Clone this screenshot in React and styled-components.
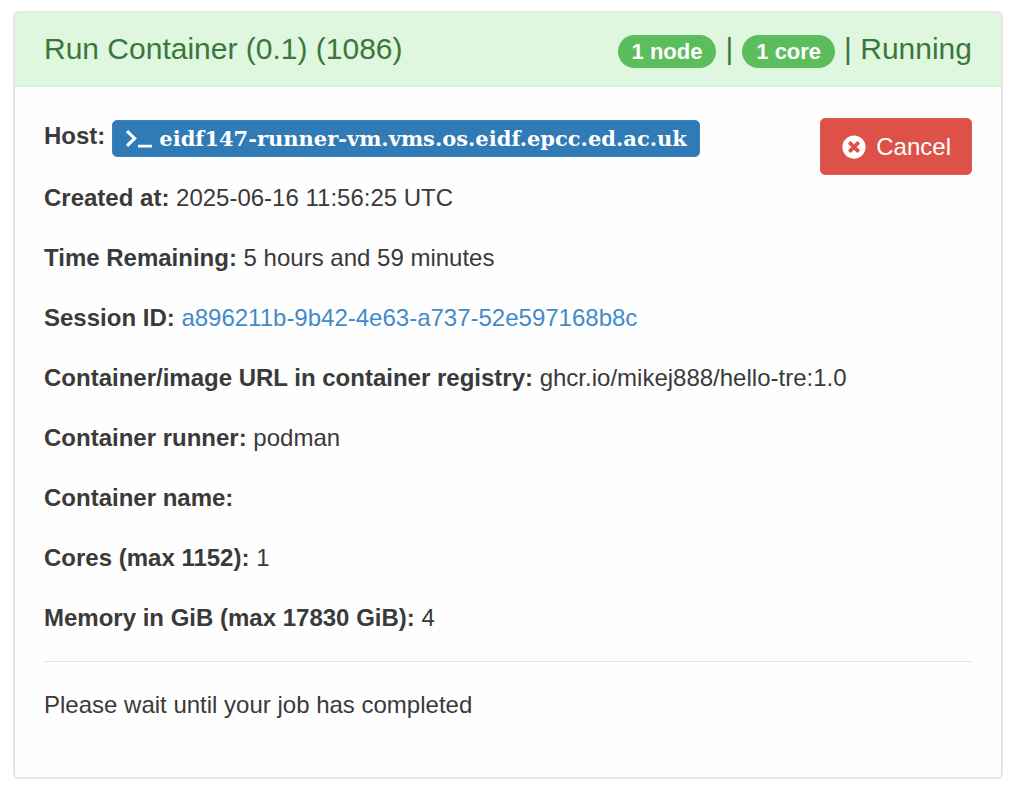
import React from "react";
import styled, { createGlobalStyle } from "styled-components";
import { FaTimesCircle } from "react-icons/fa";

const GlobalStyle = createGlobalStyle`
  *, *::before, *::after { box-sizing: border-box; }
  body {
    margin: 0;
    background: #fff;
    color: #3a3a3a;
    font-family: "Liberation Sans", Arial, sans-serif;
    font-size: 24px;
    line-height: 34px;
  }
`;

const Page = styled.main`
  padding: 11px 13px 8px;
`;

const Panel = styled.section`
  border: 2px solid #e6e6e6;
  border-radius: 6px;
  background: #fefefe;
  overflow: hidden;
`;

const PanelHeader = styled.header`
  display: flex;
  justify-content: space-between;
  align-items: center;
  padding: 16px 29px 17px;
  border-bottom: 2px solid #d6f1d3;
  background: #dff6df;
  color: #3c763d;
  font-size: 30px;
  line-height: 35px;
`;

const Title = styled.h1`
  margin: 0;
  font-size: inherit;
  font-weight: 400;
`;

const Status = styled.div`
  display: flex;
  align-items: center;
  gap: 9px;
`;

const Badge = styled.span`
  padding: 4px 14px;
  margin-top: 6px;
  border-radius: 17px;
  background: #5cbd5c;
  color: #fff;
  font-size: 22px;
  font-weight: 700;
  line-height: 25px;
`;

const PanelBody = styled.div`
  padding: 30px 29px 29px;
`;

const Row = styled.p`
  margin: 0 0 26px;
`;

const HostRow = styled.div`
  display: flex;
  align-items: flex-start;
  gap: 7px;
  padding-top: 2px;
  margin-bottom: 24px;
`;

const HostLink = styled.a`
  display: flex;
  align-items: center;
  gap: 7px;
  margin-top: 1px;
  padding: 0 12px;
  border: 1px solid #3e80b8;
  border-radius: 5px;
  background: #307ab5;
  color: #fff;
  font-family: "DejaVu Serif", serif;
  font-size: 21px;
  font-weight: 700;
  line-height: 35px;
  text-decoration: none;
`;

const SessionLink = styled.a`
  color: #428bca;
  text-decoration: none;
`;

const CancelButton = styled.button`
  float: right;
  display: flex;
  align-items: center;
  gap: 10px;
  margin-top: 1px;
  padding: 11px 20px 10px 21px;
  border: 1px solid #dd5a53;
  border-radius: 5px;
  background: #de5149;
  color: #fff;
  font: inherit;
  cursor: pointer;
`;

const Divider = styled.hr`
  height: 1px;
  margin: 0 0 26px;
  border: 0;
  background: #e4e4e4;
`;

const TerminalIcon = () => (
  <svg width="27" height="20" viewBox="0 0 27 20" fill="none" stroke="currentColor" aria-hidden="true">
    <path d="M2 2.2 L9.6 9.4 L2 16.8" strokeWidth="3.2" />
    <path d="M13 17.2 H27" strokeWidth="2.8" />
  </svg>
);

const details = [
  { label: "Container/image URL in container registry:", value: "ghcr.io/mikej888/hello-tre:1.0" },
  { label: "Container runner:", value: "podman" },
  { label: "Container name:", value: "" },
  { label: "Cores (max 1152):", value: "1" },
  { label: "Memory in GiB (max 17830 GiB):", value: "4" },
];

export default function App() {
  return (
    <>
      <GlobalStyle />
      <Page>
        <Panel>
          <PanelHeader>
            <Title>Run Container (0.1) (1086)</Title>
            <Status>
              <Badge>1 node</Badge>
              <span>|</span>
              <Badge>1 core</Badge>
              <span>| Running</span>
            </Status>
          </PanelHeader>
          <PanelBody>
            <CancelButton type="button">
              <FaTimesCircle size={24} aria-hidden="true" />
              Cancel
            </CancelButton>
            <HostRow>
              <strong>Host:</strong>
              <HostLink href="#shell">
                <TerminalIcon />
                eidf147-runner-vm.vms.os.eidf.epcc.ed.ac.uk
              </HostLink>
            </HostRow>
            <Row>
              <strong>Created at:</strong> 2025-06-16 11:56:25 UTC
            </Row>
            <Row>
              <strong>Time Remaining:</strong> 5 hours and 59 minutes
            </Row>
            <Row>
              <strong>Session ID:</strong>{" "}
              <SessionLink href="#session">a896211b-9b42-4e63-a737-52e597168b8c</SessionLink>
            </Row>
            {details.map(({ label, value }) => (
              <Row key={label}>
                <strong>{label}</strong> {value}
              </Row>
            ))}
            <Divider />
            <Row>Please wait until your job has completed</Row>
          </PanelBody>
        </Panel>
      </Page>
    </>
  );
}
